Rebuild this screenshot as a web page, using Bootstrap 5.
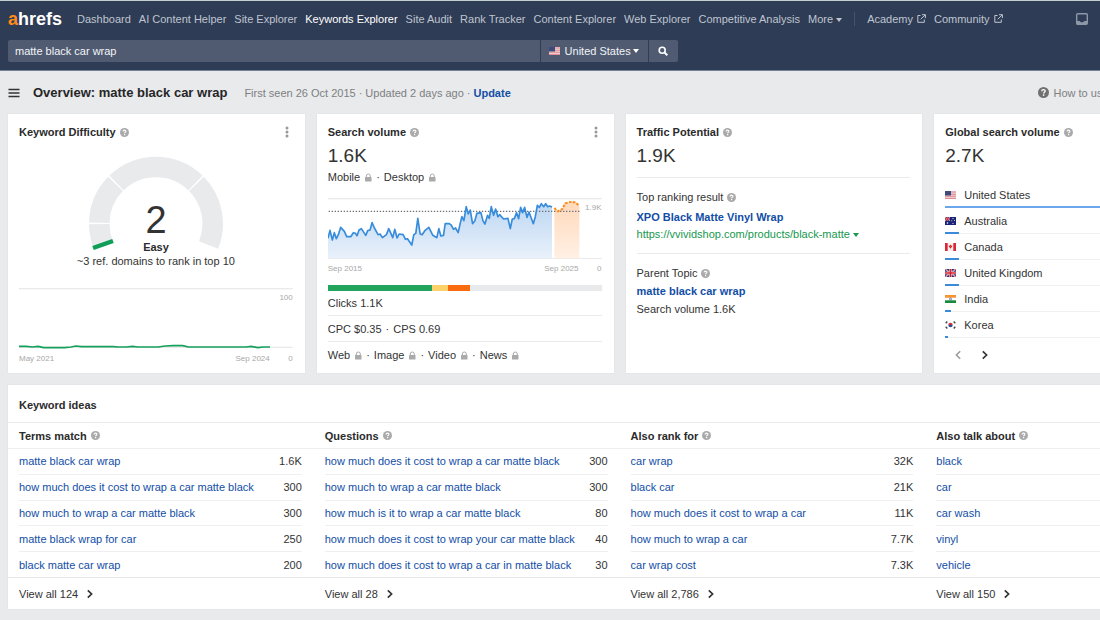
<!DOCTYPE html>
<html lang="en">
<head>
<meta charset="utf-8">
<meta name="viewport" content="width=device-width, initial-scale=1">
<title>Keywords Explorer – matte black car wrap</title>
<link href="https://cdn.jsdelivr.net/npm/bootstrap@5.3.0/dist/css/bootstrap.min.css" rel="stylesheet">
<style>
body{font-family:"Liberation Sans",Arial,sans-serif;font-size:11px;line-height:16px;color:#333;background:#e9eaec;overflow-x:hidden}
a{color:#124ea6;text-decoration:none}
svg{display:block;flex:none}
h1,h2,h3,p,ul{margin:0;font-size:11px;line-height:16px}
h2,h3{font-weight:700;color:#2b2b2b}
/* top bar */
.topbar{background:#2f3c56;border-top:1px solid #c6cfcf;border-bottom:1px solid #74819a;padding:0 12px 8px 8px}
.mainnav{height:35px;gap:8px;white-space:nowrap}
.mainnav a{color:#bfc5cf}
.mainnav a.active{color:#fff}
.mainnav a.brand{font-size:18px;font-weight:700;line-height:20px;color:#fff;margin-right:7px}
.brand span{color:#ff8b1a}
.vline{width:1px;height:14px;background:#46536b;margin:0 4px}
.caret{width:0;height:0;border:3px solid transparent;border-top:4px solid currentColor;border-bottom:0;display:inline-block;vertical-align:middle}
.searchbar{width:62%;height:22px;gap:1px;margin-top:4px}
.searchbar input,.searchbar select,.searchbar button{background:#505b72;color:#f2f4f7;border:0;height:22px;font-size:11px;line-height:16px;border-radius:0}
.searchbar input{padding:2px 7px;border-radius:2px 0 0 2px;min-width:0}
.searchbar input:focus{outline:0}
.searchbar select{appearance:none;padding:2px 8px 2px 24px;width:107px}
.searchbar button{width:29px;border-radius:0 2px 2px 0;padding:0}
.sel-flag{left:8px;top:7px;pointer-events:none}
.sel-caret{right:9px;top:9px;color:#fff;pointer-events:none}
/* title row */
.titlerow{height:43px;padding-left:8px;white-space:nowrap}
.titlemain{flex:0 0 94%}
.titlerow h1{font-size:13px;font-weight:700;color:#262626;margin:0 17px 0 13px}
.title-meta{gap:3px}
.grey{color:#7d7f82}
.menu-btn,.icon-btn{background:none;border:0;padding:0;color:#333}
/* cards */
.board{padding-left:8px}
.wide{width:112%}
.metrics{display:grid;grid-template-columns:repeat(4,minmax(0,1fr));gap:12px}
.panel{background:#fff;box-shadow:0 0 1px #d5d7da}
.metric{padding:10px 12px 4px 11px;min-height:259px}
.help{color:#aaa}
.stat{font-size:19px;line-height:24px;margin-top:4px}
.axis{font-size:8px;line-height:12px;color:#a8a8a8}
.axis .zero{width:23px;text-align:right}
.lbl{right:0;background:#fff}
.plot{width:100%;height:61px}
.meter{height:6px;margin-top:10px;background:#e8e9ea}
.line-b{border-bottom:1px solid #e9eaeb}
.row26{height:26px}
.seg-a{background:#23a55e}.seg-b{background:#fdd26a}.seg-c{background:#fa6b0f}
.url{color:#16984f}
.countries li{height:26px;padding-top:5px;border-bottom:1px solid #f0f0f1;gap:8px;position:relative}
.countries i{position:absolute;left:0;bottom:-1px;height:2px;background:#3a8bdc}
.countries li:first-child i{background:#6ba5ea}
.pager{margin:12px 0 0 9px;gap:19px}
/* ideas */
.ideas{margin-top:12px}
.ideas-head{padding:12px 11px 9px;border-bottom:1px solid #ebecec}
.ideagrid{display:grid;grid-template-columns:repeat(4,minmax(0,1fr))}
.colhead{height:26px;padding:0 11px;border-bottom:1px solid #efeff0}
.colbody{padding:0 12px 0 11px;border-bottom:1px solid #e6e7e8}
.colbody table{width:100%;height:128px;white-space:nowrap}
.colbody td{padding:0;border-bottom:1px solid #efeff0;vertical-align:middle}
.colbody tr:last-child td{border-bottom:0}
.colbody td+td{text-align:right}
.colfoot{padding:8px 11px 7px}
.colfoot a{color:#333}
</style>
</head>
<body>
<svg width="0" height="0" class="position-absolute" aria-hidden="true">
<defs>
<symbol id="help" viewBox="0 0 12 12"><circle cx="6" cy="6" r="6" fill="currentColor"/><path d="M4.100 4.600C4.200 2.300 7.900 2.400 7.800 4.500C7.700 5.700 6.100 5.700 6.100 7.100" fill="none" stroke="#fff" stroke-width="1.500"/><rect x="5.300" y="8" width="1.600" height="1.600" fill="#fff"/></symbol>
<symbol id="lock" viewBox="0 0 8 9"><rect x="1" y="4" width="6.500" height="4.500" rx=".6" fill="#aaa"/><path d="M2.300 4.500V3a2 2 0 0 1 4 0v1.500" fill="none" stroke="#aaa"/></symbol>
<symbol id="dots" viewBox="0 0 4 12"><g fill="#999"><circle cx="2" cy="2" r="1.500"/><circle cx="2" cy="6" r="1.500"/><circle cx="2" cy="10" r="1.500"/></g></symbol>
<symbol id="chev" viewBox="0 0 8 10"><path d="M1.800 1.300L5.600 5L1.800 8.700" fill="none" stroke="currentColor" stroke-width="1.700"/></symbol>
<symbol id="ext" viewBox="0 0 9 9"><path d="M3.500 1.500H.8v6.800h6.500V5.500M5 .7h3.400v3.400M8.200.9L3.700 5.300" fill="none" stroke="currentColor"/></symbol>
<symbol id="us" viewBox="0 0 11 8"><rect width="11" height="8" fill="#f3dfe1"/><path d="M0 1h11M0 3.200h11M0 5.200h11M0 7.300h11" stroke="#d77c80"/><rect width="6" height="4.500" fill="#3c4a7c"/></symbol>
<symbol id="au" viewBox="0 0 11 8"><rect width="11" height="8" fill="#1a2375"/><path d="M0 0l5 4M5 0L0 4M2.500 0v4M0 2h5" stroke="#f1b3b8" stroke-width=".9"/><path d="M2.500 0v4M0 2h5" stroke="#d22" stroke-width=".7"/><g fill="#fff"><circle cx="2.500" cy="6" r=".8"/><circle cx="8" cy="1.500" r=".6"/><circle cx="8" cy="6.500" r=".6"/><circle cx="6.800" cy="3.800" r=".5"/><circle cx="9.500" cy="3.300" r=".5"/></g></symbol>
<symbol id="ca" viewBox="0 0 11 8"><rect width="11" height="8" fill="#fbeeee"/><path d="M0 0h2.700v8H0zM8.300 0H11v8H8.300zM5.500 1.500l.7 1 1.200.3-.8 1.800-.9.500v1.200h-.4V5.100l-.9-.5-.8-1.800 1.200-.3z" fill="#d62b36"/></symbol>
<symbol id="gb" viewBox="0 0 11 8"><rect width="11" height="8" fill="#24307c"/><path d="M0 0l11 8M11 0L0 8" stroke="#fff" stroke-width="1.300"/><path d="M0 0l11 8M11 0L0 8" stroke="#d3202f" stroke-width=".7"/><path d="M5.500 0v8M0 4h11" stroke="#fff" stroke-width="2.400"/><path d="M5.500 0v8M0 4h11" stroke="#d3202f" stroke-width="1.700"/></symbol>
<symbol id="in" viewBox="0 0 11 8"><rect width="11" height="8" fill="#fff"/><rect width="11" height="2.700" fill="#f59331"/><rect y="5.300" width="11" height="2.700" fill="#178a3c"/><circle cx="5.500" cy="4" r="1" fill="none" stroke="#2a3a8c" stroke-width=".6"/></symbol>
<symbol id="kr" viewBox="0 0 11 8"><rect width="11" height="8" fill="#fff"/><path d="M3.300 4a2.200 2.200 0 0 1 4.400 0z" fill="#d32f3c"/><path d="M3.300 4a2.200 2.200 0 0 0 4.400 0z" fill="#24508f"/><path d="M.7 2.300L2.300.6M8.700.6l1.600 1.700M.7 5.700l1.600 1.700M8.700 7.400l1.600-1.700" stroke="#444" stroke-width="1.400"/></symbol>
</defs>
</svg>

<header class="topbar">
<nav class="mainnav d-flex align-items-center" aria-label="Main">
<a class="brand" href="#"><span>a</span>hrefs</a>
<a href="#">Dashboard</a>
<a href="#">AI Content Helper</a>
<a href="#">Site Explorer</a>
<a href="#" class="active">Keywords Explorer</a>
<a href="#">Site Audit</a>
<a href="#">Rank Tracker</a>
<a href="#">Content Explorer</a>
<a href="#">Web Explorer</a>
<a href="#">Competitive Analysis</a>
<a href="#">More <span class="caret"></span></a>
<span class="vline"></span>
<a href="#" class="d-flex align-items-center gap-1">Academy <svg width="9" height="9"><use href="#ext"/></svg></a>
<a href="#" class="d-flex align-items-center gap-1">Community <svg width="9" height="9"><use href="#ext"/></svg></a>
<a href="#" class="ms-auto" aria-label="Inbox"><svg width="12" height="12" viewBox="0 0 12 12"><rect x=".7" y=".7" width="10.600" height="10.600" rx="1" fill="none" stroke="#8d97a7" stroke-width="1.400"/><path d="M1 8h2.800c.4 1.800 4 1.800 4.400 0H11v3H1z" fill="#8d97a7"/></svg></a>
</nav>
<form class="searchbar d-flex">
<input type="text" class="flex-grow-1" value="matte black car wrap" aria-label="Keyword">
<div class="position-relative">
<svg class="sel-flag position-absolute" width="11" height="8"><use href="#us"/></svg>
<select aria-label="Country"><option>United States</option></select>
<span class="caret sel-caret position-absolute"></span>
</div>
<button type="button" class="d-flex align-items-center justify-content-center" aria-label="Search"><svg width="10" height="10" viewBox="0 0 10 10" fill="none" stroke="#fff"><circle cx="4.200" cy="4.200" r="3" stroke-width="1.600"/><path d="M6.400 6.400L9.300 9.300" stroke-width="2"/></svg></button>
</form>
</header>

<main class="overflow-hidden pb-2">
<div class="titlerow d-flex align-items-center">
<div class="titlemain d-flex align-items-center">
<button class="menu-btn" aria-label="Menu"><svg width="12" height="10" viewBox="0 0 12 10"><path d="M.5 1.500h11M.5 5h11M.5 8.500h11" stroke="#333" stroke-width="1.500"/></svg></button>
<h1>Overview: matte black car wrap</h1>
<div class="grey title-meta d-flex"><span>First seen 26 Oct 2015</span><span>·</span><span>Updated 2 days ago</span><span>·</span><a href="#" class="fw-bold">Update</a></div>
</div>
<a href="#" class="grey d-flex align-items-center gap-1 ms-1"><svg width="11" height="11" color="#707070"><use href="#help"/></svg>How to use</a>
</div>

<div class="board">
<div class="metrics wide">
<section class="metric panel">
<div class="d-flex align-items-center gap-1"><h2>Keyword Difficulty</h2><svg class="help" width="9" height="9"><use href="#help"/></svg><button class="icon-btn ms-auto me-1" aria-label="Options"><svg width="4" height="12"><use href="#dots"/></svg></button></div>
<svg class="mx-auto mt-3" width="136" height="98" viewBox="0 0 136 98" role="img" aria-label="Difficulty 2, Easy">
<path d="M15.400 89A56.750 56.750 0 1 1 120.600 89" pathLength="100" fill="none" stroke="#e9eaec" stroke-width="20.500" stroke-dasharray="9.700 .6 19.400 .6 39.400 .6 29.700"/>
<path d="M5 92L25 85" stroke="#0e9e57" stroke-width="4.500"/>
<text x="68" y="77" font-size="38" text-anchor="middle" fill="#333">2</text>
<text x="68" y="95" font-size="11" font-weight="700" text-anchor="middle" fill="#2b2b2b">Easy</text>
</svg>
<p class="text-center" style="line-height:14px">~3 ref. domains to rank in top 10</p>
<div class="position-relative" style="margin-top:20px">
<svg class="plot" viewBox="58 54 820 183" preserveAspectRatio="none" fill="none"><path d="M58 56H878M58 232H878" stroke="#e3e4e6" stroke-width="3"/><path d="M58 229H80L98 231L115 229L132 233H195L214 231L228 228L245 230H340L356 231H380L398 229L414 231H475L496 228L520 227H548L566 231H738L754 229L773 233L790 231H810" stroke="#14a05a" stroke-width="5"/></svg>
<span class="axis lbl position-absolute top-0 mt-1">100</span>
</div>
<div class="axis d-flex mt-1"><span>May 2021</span><span class="ms-auto">Sep 2024</span><span class="zero">0</span></div>
</section>

<section class="metric panel">
<div class="d-flex align-items-center gap-1"><h2>Search volume</h2><svg class="help" width="9" height="9"><use href="#help"/></svg><button class="icon-btn ms-auto me-1" aria-label="Options"><svg width="4" height="12"><use href="#dots"/></svg></button></div>
<div class="stat">1.6K</div>
<div class="d-flex align-items-center gap-1" style="margin-top:1px"><span>Mobile</span><svg width="8" height="9"><use href="#lock"/></svg><span>·</span><span>Desktop</span><svg width="8" height="9"><use href="#lock"/></svg></div>
<div class="position-relative" style="margin-top:13px">
<svg class="plot" viewBox="54 264 820 183" preserveAspectRatio="none" fill="none">
<defs><linearGradient id="bl" x2="0" y2="1"><stop stop-color="#bdd7f2"/><stop offset="1" stop-color="#e9f1fb"/></linearGradient><linearGradient id="og" x2="0" y2="1"><stop stop-color="#ffd9ba"/><stop offset="1" stop-color="#fff0e4"/></linearGradient></defs>
<path d="M54 266H874M54 446H874" stroke="#e3e4e6" stroke-width="3"/>
<path fill="url(#bl)" d="M54 385L60 361L67 390L73 368L79 386L85 374L92 352L103 364L110 380H122L130 368L136 370L141 377L147 360L154 356L167 376L173 362L180 360L186 338L193 354L204 374L210 372L217 383L229 374L236 356L248 383L254 358L261 384L267 372L279 374L286 388L292 386L305 405L311 374L317 370L323 325L330 372L336 374L344 362L356 352L368 376L380 383L386 356L392 378L400 376L405 341H417L423 345L430 358L436 354L444 368L450 340L455 320L461 332L468 290L474 312L480 300L487 341L494 332L500 310L512 308L518 332L524 342L532 316L537 325L543 290L550 316L556 297L563 320L568 314L580 327L593 325L600 356L606 327L612 326L619 308L625 326L631 292L637 308L643 292L650 322L656 306L669 341L675 320L681 286L687 292L693 281L700 290L706 281L712 290L718 288L725 291V445H54Z"/>
<path fill="url(#og)" d="M732 294L742 304L755 298L765 280L784 275L796 278L807 288V445H732Z"/>
<path d="M56 304H807" stroke="#6b6f76" stroke-width="4" stroke-dasharray="4 5"/>
<path stroke="#378cdb" stroke-width="5" stroke-linejoin="round" d="M54 385L60 361L67 390L73 368L79 386L85 374L92 352L103 364L110 380H122L130 368L136 370L141 377L147 360L154 356L167 376L173 362L180 360L186 338L193 354L204 374L210 372L217 383L229 374L236 356L248 383L254 358L261 384L267 372L279 374L286 388L292 386L305 405L311 374L317 370L323 325L330 372L336 374L344 362L356 352L368 376L380 383L386 356L392 378L400 376L405 341H417L423 345L430 358L436 354L444 368L450 340L455 320L461 332L468 290L474 312L480 300L487 341L494 332L500 310L512 308L518 332L524 342L532 316L537 325L543 290L550 316L556 297L563 320L568 314L580 327L593 325L600 356L606 327L612 326L619 308L625 326L631 292L637 308L643 292L650 322L656 306L669 341L675 320L681 286L687 292L693 281L700 290L706 281L712 290L718 288L725 291"/>
<path stroke="#f98a1b" stroke-width="6" stroke-dasharray="8 4" d="M732 294L742 304L755 298L765 280L784 275L796 278L807 288"/>
</svg>
<span class="axis lbl position-absolute top-0 mt-1">1.9K</span>
</div>
<div class="axis d-flex mt-1"><span>Sep 2015</span><span class="ms-auto">Sep 2025</span><span class="zero">0</span></div>
<div class="meter d-flex"><div class="seg-a" style="width:38%"></div><div class="seg-b" style="width:6%"></div><div class="seg-c" style="width:8%"></div></div>
<div class="line-b" style="padding:4px 0">Clicks 1.1K</div>
<div class="line-b row26 d-flex align-items-center gap-1"><span>CPC $0.35</span><span>·</span><span>CPS 0.69</span></div>
<div class="row26 d-flex align-items-center gap-1"><span>Web</span><svg width="8" height="9"><use href="#lock"/></svg><span>·</span><span>Image</span><svg width="8" height="9"><use href="#lock"/></svg><span>·</span><span>Video</span><svg width="8" height="9"><use href="#lock"/></svg><span>·</span><span>News</span><svg width="8" height="9"><use href="#lock"/></svg></div>
</section>

<section class="metric panel">
<div class="d-flex align-items-center gap-1"><h2>Traffic Potential</h2><svg class="help" width="9" height="9"><use href="#help"/></svg></div>
<div class="stat line-b" style="padding-bottom:9px">1.9K</div>
<div class="d-flex align-items-center gap-1" style="margin-top:11px"><span>Top ranking result</span><svg class="help" width="9" height="9"><use href="#help"/></svg></div>
<div class="mt-1"><a href="#" class="fw-bold">XPO Black Matte Vinyl Wrap</a></div>
<div class="line-b" style="padding:1px 0 11px"><a href="#" class="url">https://vvividshop.com/products/black-matte <span class="caret"></span></a></div>
<div class="d-flex align-items-center gap-1" style="margin-top:11px"><span>Parent Topic</span><svg class="help" width="9" height="9"><use href="#help"/></svg></div>
<div style="margin:2px 0"><a href="#" class="fw-bold">matte black car wrap</a></div>
<div>Search volume 1.6K</div>
</section>

<section class="metric panel">
<div class="d-flex align-items-center gap-1"><h2>Global search volume</h2><svg class="help" width="9" height="9"><use href="#help"/></svg></div>
<div class="stat">2.7K</div>
<ul class="countries list-unstyled" style="margin-top:14px">
<li class="d-flex"><svg class="mt-1" width="11" height="8"><use href="#us"/></svg>United States<i style="width:100%"></i></li>
<li class="d-flex"><svg class="mt-1" width="11" height="8"><use href="#au"/></svg>Australia<i style="width:5%"></i></li>
<li class="d-flex"><svg class="mt-1" width="11" height="8"><use href="#ca"/></svg>Canada<i style="width:5%"></i></li>
<li class="d-flex"><svg class="mt-1" width="11" height="8"><use href="#gb"/></svg>United Kingdom<i style="width:5%"></i></li>
<li class="d-flex"><svg class="mt-1" width="11" height="8"><use href="#in"/></svg>India<i style="width:2%"></i></li>
<li class="d-flex"><svg class="mt-1" width="11" height="8"><use href="#kr"/></svg>Korea<i style="width:1%"></i></li>
</ul>
<div class="pager d-flex"><button class="icon-btn" style="color:#999" aria-label="Previous"><svg width="8" height="10" viewBox="0 0 8 10"><path d="M6.200 1.300L2.400 5L6.200 8.700" fill="none" stroke="currentColor" stroke-width="1.500"/></svg></button><button class="icon-btn" aria-label="Next"><svg width="8" height="10"><use href="#chev"/></svg></button></div>
</section>
</div>

<section class="ideas panel wide">
<div class="ideas-head"><h2>Keyword ideas</h2></div>
<div class="ideagrid">
<div>
<div class="colhead d-flex align-items-center gap-1"><h3>Terms match</h3><svg class="help" width="9" height="9"><use href="#help"/></svg></div>
<div class="colbody"><table>
<tr><td><a href="#">matte black car wrap</a></td><td>1.6K</td></tr>
<tr><td><a href="#">how much does it cost to wrap a car matte black</a></td><td>300</td></tr>
<tr><td><a href="#">how much to wrap a car matte black</a></td><td>300</td></tr>
<tr><td><a href="#">matte black wrap for car</a></td><td>250</td></tr>
<tr><td><a href="#">black matte car wrap</a></td><td>200</td></tr>
</table></div>
<div class="colfoot"><a href="#" class="d-flex align-items-center gap-2">View all 124 <svg width="8" height="10"><use href="#chev"/></svg></a></div>
</div>
<div>
<div class="colhead d-flex align-items-center gap-1"><h3>Questions</h3><svg class="help" width="9" height="9"><use href="#help"/></svg></div>
<div class="colbody"><table>
<tr><td><a href="#">how much does it cost to wrap a car matte black</a></td><td>300</td></tr>
<tr><td><a href="#">how much to wrap a car matte black</a></td><td>300</td></tr>
<tr><td><a href="#">how much is it to wrap a car matte black</a></td><td>80</td></tr>
<tr><td><a href="#">how much does it cost to wrap your car matte black</a></td><td>40</td></tr>
<tr><td><a href="#">how much does it cost to wrap a car in matte black</a></td><td>30</td></tr>
</table></div>
<div class="colfoot"><a href="#" class="d-flex align-items-center gap-2">View all 28 <svg width="8" height="10"><use href="#chev"/></svg></a></div>
</div>
<div>
<div class="colhead d-flex align-items-center gap-1"><h3>Also rank for</h3><svg class="help" width="9" height="9"><use href="#help"/></svg></div>
<div class="colbody"><table>
<tr><td><a href="#">car wrap</a></td><td>32K</td></tr>
<tr><td><a href="#">black car</a></td><td>21K</td></tr>
<tr><td><a href="#">how much does it cost to wrap a car</a></td><td>11K</td></tr>
<tr><td><a href="#">how much to wrap a car</a></td><td>7.7K</td></tr>
<tr><td><a href="#">car wrap cost</a></td><td>7.3K</td></tr>
</table></div>
<div class="colfoot"><a href="#" class="d-flex align-items-center gap-2">View all 2,786 <svg width="8" height="10"><use href="#chev"/></svg></a></div>
</div>
<div>
<div class="colhead d-flex align-items-center gap-1"><h3>Also talk about</h3><svg class="help" width="9" height="9"><use href="#help"/></svg></div>
<div class="colbody"><table>
<tr><td><a href="#">black</a></td></tr>
<tr><td><a href="#">car</a></td></tr>
<tr><td><a href="#">car wash</a></td></tr>
<tr><td><a href="#">vinyl</a></td></tr>
<tr><td><a href="#">vehicle</a></td></tr>
</table></div>
<div class="colfoot"><a href="#" class="d-flex align-items-center gap-2">View all 150 <svg width="8" height="10"><use href="#chev"/></svg></a></div>
</div>
</div>
</section>
</div>
</main>
<script src="https://cdn.jsdelivr.net/npm/bootstrap@5.3.0/dist/js/bootstrap.bundle.min.js"></script>
</body>
</html>
